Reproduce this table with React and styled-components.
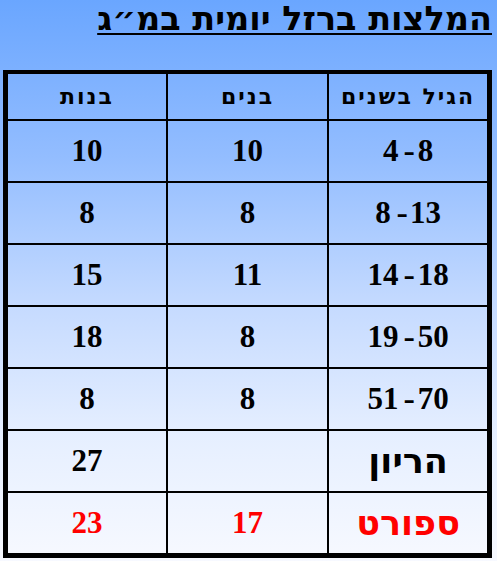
import React from "react";
import styled, { createGlobalStyle } from "styled-components";

const rows = [
  { age: ["4", "8"], boys: "10", girls: "10" },
  { age: ["8", "13"], boys: "8", girls: "8" },
  { age: ["14", "18"], boys: "11", girls: "15" },
  { age: ["19", "50"], boys: "8", girls: "18" },
  { age: ["51", "70"], boys: "8", girls: "8" },
  { age: "הריון", boys: "", girls: "27" },
  { age: "ספורט", boys: "17", girls: "23", hot: true },
];

function Age({ value }) {
  if (typeof value === "string") return <HebLabel>{value}</HebLabel>;
  return (
    <Range dir="ltr">
      {value[0]}
      <Dash>-</Dash>
      {value[1]}
    </Range>
  );
}

export default function App() {
  return (
    <>
      <GlobalStyle />
      <Page dir="rtl">
        <Title>המלצות ברזל יומית במ״ג</Title>
        <Table>
          <thead>
            <tr>
              <Head>הגיל בשנים</Head>
              <Head>בנים</Head>
              <Head>בנות</Head>
            </tr>
          </thead>
          <tbody>
            {rows.map((r, i) => (
              <tr key={i}>
                <Cell $hot={r.hot}>
                  <Age value={r.age} />
                </Cell>
                <Cell $hot={r.hot}>{r.boys}</Cell>
                <Cell $hot={r.hot}>{r.girls}</Cell>
              </tr>
            ))}
          </tbody>
        </Table>
      </Page>
    </>
  );
}

const hebrew = `"DejaVu Sans", "Liberation Sans", sans-serif`;
const digits = `"Liberation Serif", "DejaVu Serif", serif`;

const GlobalStyle = createGlobalStyle`
  html, body { margin: 0; padding: 0; }
  body { background: #f7f9ff; }
`;

const Page = styled.div`
  width: 497px;
  height: 561px;
  box-sizing: border-box;
  padding: 0 5px 0 3px;
  background: linear-gradient(to bottom, #6aa6ff 0%, #93bdff 28%, #c6dbff 55%, #e6efff 78%, #f7f9ff 100%);
  font-family: ${digits};
  overflow: hidden;
`;

const Title = styled.h1`
  margin: 0;
  height: 70px;
  font-family: ${hebrew};
  font-size: 33.5px;
  font-weight: bold;
  line-height: 38px;
  color: #000;
  text-align: right;
  text-decoration: underline;
  text-decoration-thickness: 2px;
  text-underline-offset: 3px;
`;

const Table = styled.table`
  width: 489px;
  border-collapse: collapse;
  border-top: 4px solid #000;
  border-bottom: 5px solid #000;
  border-left: 5px solid #000;
  border-right: 5px solid #000;
  table-layout: fixed;
`;

const Head = styled.th`
  height: 45px;
  padding: 0;
  font-family: ${hebrew};
  font-size: 22px;
  font-weight: bold;
  letter-spacing: 2px;
  text-align: center;
  border: 2px solid #000;
  border-top: none;
`;

const Cell = styled.td`
  height: 60px;
  padding: 0;
  font-family: ${digits};
  font-size: 31px;
  font-weight: bold;
  text-align: center;
  color: ${(p) => (p.$hot ? "#ff0000" : "#000")};
  border: 2px solid #000;
`;

const Range = styled.span`
  display: inline-block;
  direction: ltr;
  unicode-bidi: isolate;
`;

const Dash = styled.span`
  display: inline-block;
  margin: 0 3px 0 6px;
  transform: scaleX(1.1);
`;

const HebLabel = styled.span`
  font-family: ${hebrew};
  font-size: 35px;
`;
